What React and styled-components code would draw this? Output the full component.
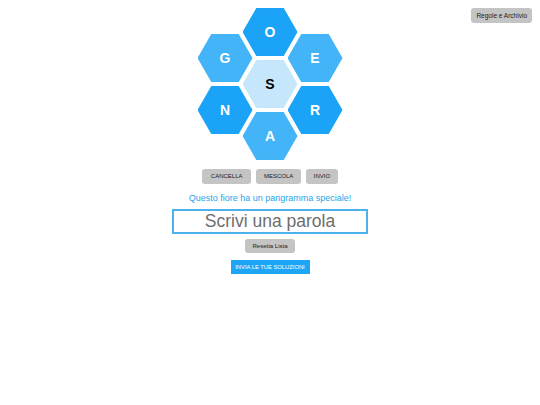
import React from "react";
import styled, { createGlobalStyle } from "styled-components";

const Global = createGlobalStyle`
  html, body { margin: 0; padding: 0; background: #ffffff; }
  body { font-family: "Liberation Sans", Arial, sans-serif; }
  * { box-sizing: border-box; }
`;

const Page = styled.div`
  position: relative;
  width: 540px;
  min-height: 405px;
  display: flex;
  flex-direction: column;
  align-items: center;
  padding-top: 8px;
`;

const RulesButton = styled.button`
  position: absolute;
  top: 8px;
  right: 8px;
  height: 15px;
  padding: 0 5px;
  border: none;
  border-radius: 3px;
  background: #c4c4c4;
  color: #222;
  font-family: "Liberation Sans", Arial, sans-serif;
  font-size: 6.5px;
  line-height: 15px;
`;

const Hive = styled.div`
  position: relative;
  width: 145px;
  height: 152px;
`;

const Hex = styled.div`
  position: absolute;
  left: ${(p) => p.$x}px;
  top: ${(p) => p.$y}px;
  width: 55px;
  height: 48px;
  clip-path: polygon(25% 0, 75% 0, 100% 50%, 75% 100%, 25% 100%, 0 50%);
  background: ${(p) => (p.$center ? "#c6e7fb" : p.$dark ? "#1ba3f7" : "#44b4f8")};
  color: ${(p) => (p.$center ? "#000" : "#fff")};
  display: flex;
  align-items: center;
  justify-content: center;
  font-weight: bold;
  font-size: 14px;
`;

const ButtonRow = styled.div`
  display: flex;
  gap: 5px;
  margin-top: 9px;
`;

const GrayButton = styled.button`
  height: ${(p) => p.$h || 15}px;
  padding: 0 ${(p) => p.$pad || 8}px;
  border: none;
  border-radius: 3px;
  background: #c4c4c4;
  color: #222;
  font-family: "Liberation Sans", Arial, sans-serif;
  font-size: 6px;
  line-height: 15px;
  min-width: ${(p) => p.$w || 0}px;
`;

const Pangram = styled.div`
  margin-top: 9px;
  color: #29a4ea;
  font-size: 9px;
  line-height: 11px;
`;

const WordInput = styled.input`
  margin-top: 5px;
  width: 196px;
  height: 25px;
  border: 2px solid #4db2ec;
  padding: 0;
  text-align: center;
  font-family: "Liberation Sans", Arial, sans-serif;
  font-size: 17.5px;
  color: #333;
  outline: none;
  &::placeholder { color: #6e6e6e; }
`;

const ResetButton = styled(GrayButton)`
  margin-top: 5px;
  height: 14px;
  line-height: 14px;
`;

const SubmitButton = styled.button`
  margin-top: 7px;
  height: 14px;
  width: 79px;
  padding: 0;
  border: none;
  background: #1ea6f6;
  color: #fff;
  font-family: "Liberation Sans", Arial, sans-serif;
  font-size: 5.8px;
  line-height: 14px;
`;

const cells = [
  { l: "O", x: 45, y: 0, dark: true },
  { l: "G", x: 0, y: 26, dark: false },
  { l: "E", x: 90, y: 26, dark: false },
  { l: "S", x: 45, y: 52, center: true },
  { l: "N", x: 0, y: 78, dark: true },
  { l: "R", x: 90, y: 78, dark: true },
  { l: "A", x: 45, y: 104, dark: false },
];

export default function App() {
  return (
    <Page>
      <Global />
      <RulesButton>Regole e Archivio</RulesButton>
      <Hive>
        {cells.map((c) => (
          <Hex key={c.l} $x={c.x} $y={c.y} $dark={c.dark} $center={c.center}>
            {c.l}
          </Hex>
        ))}
      </Hive>
      <ButtonRow>
        <GrayButton $pad={8.5}>CANCELLA</GrayButton>
        <GrayButton $pad={8}>MESCOLA</GrayButton>
        <GrayButton $pad={7.5}>INVIO</GrayButton>
      </ButtonRow>
      <Pangram>Questo fiore ha un pangramma speciale!</Pangram>
      <WordInput placeholder="Scrivi una parola" />
      <ResetButton $pad={7.5}>Resetta Lista</ResetButton>
      <SubmitButton>INVIA LE TUE SOLUZIONI</SubmitButton>
    </Page>
  );
}
